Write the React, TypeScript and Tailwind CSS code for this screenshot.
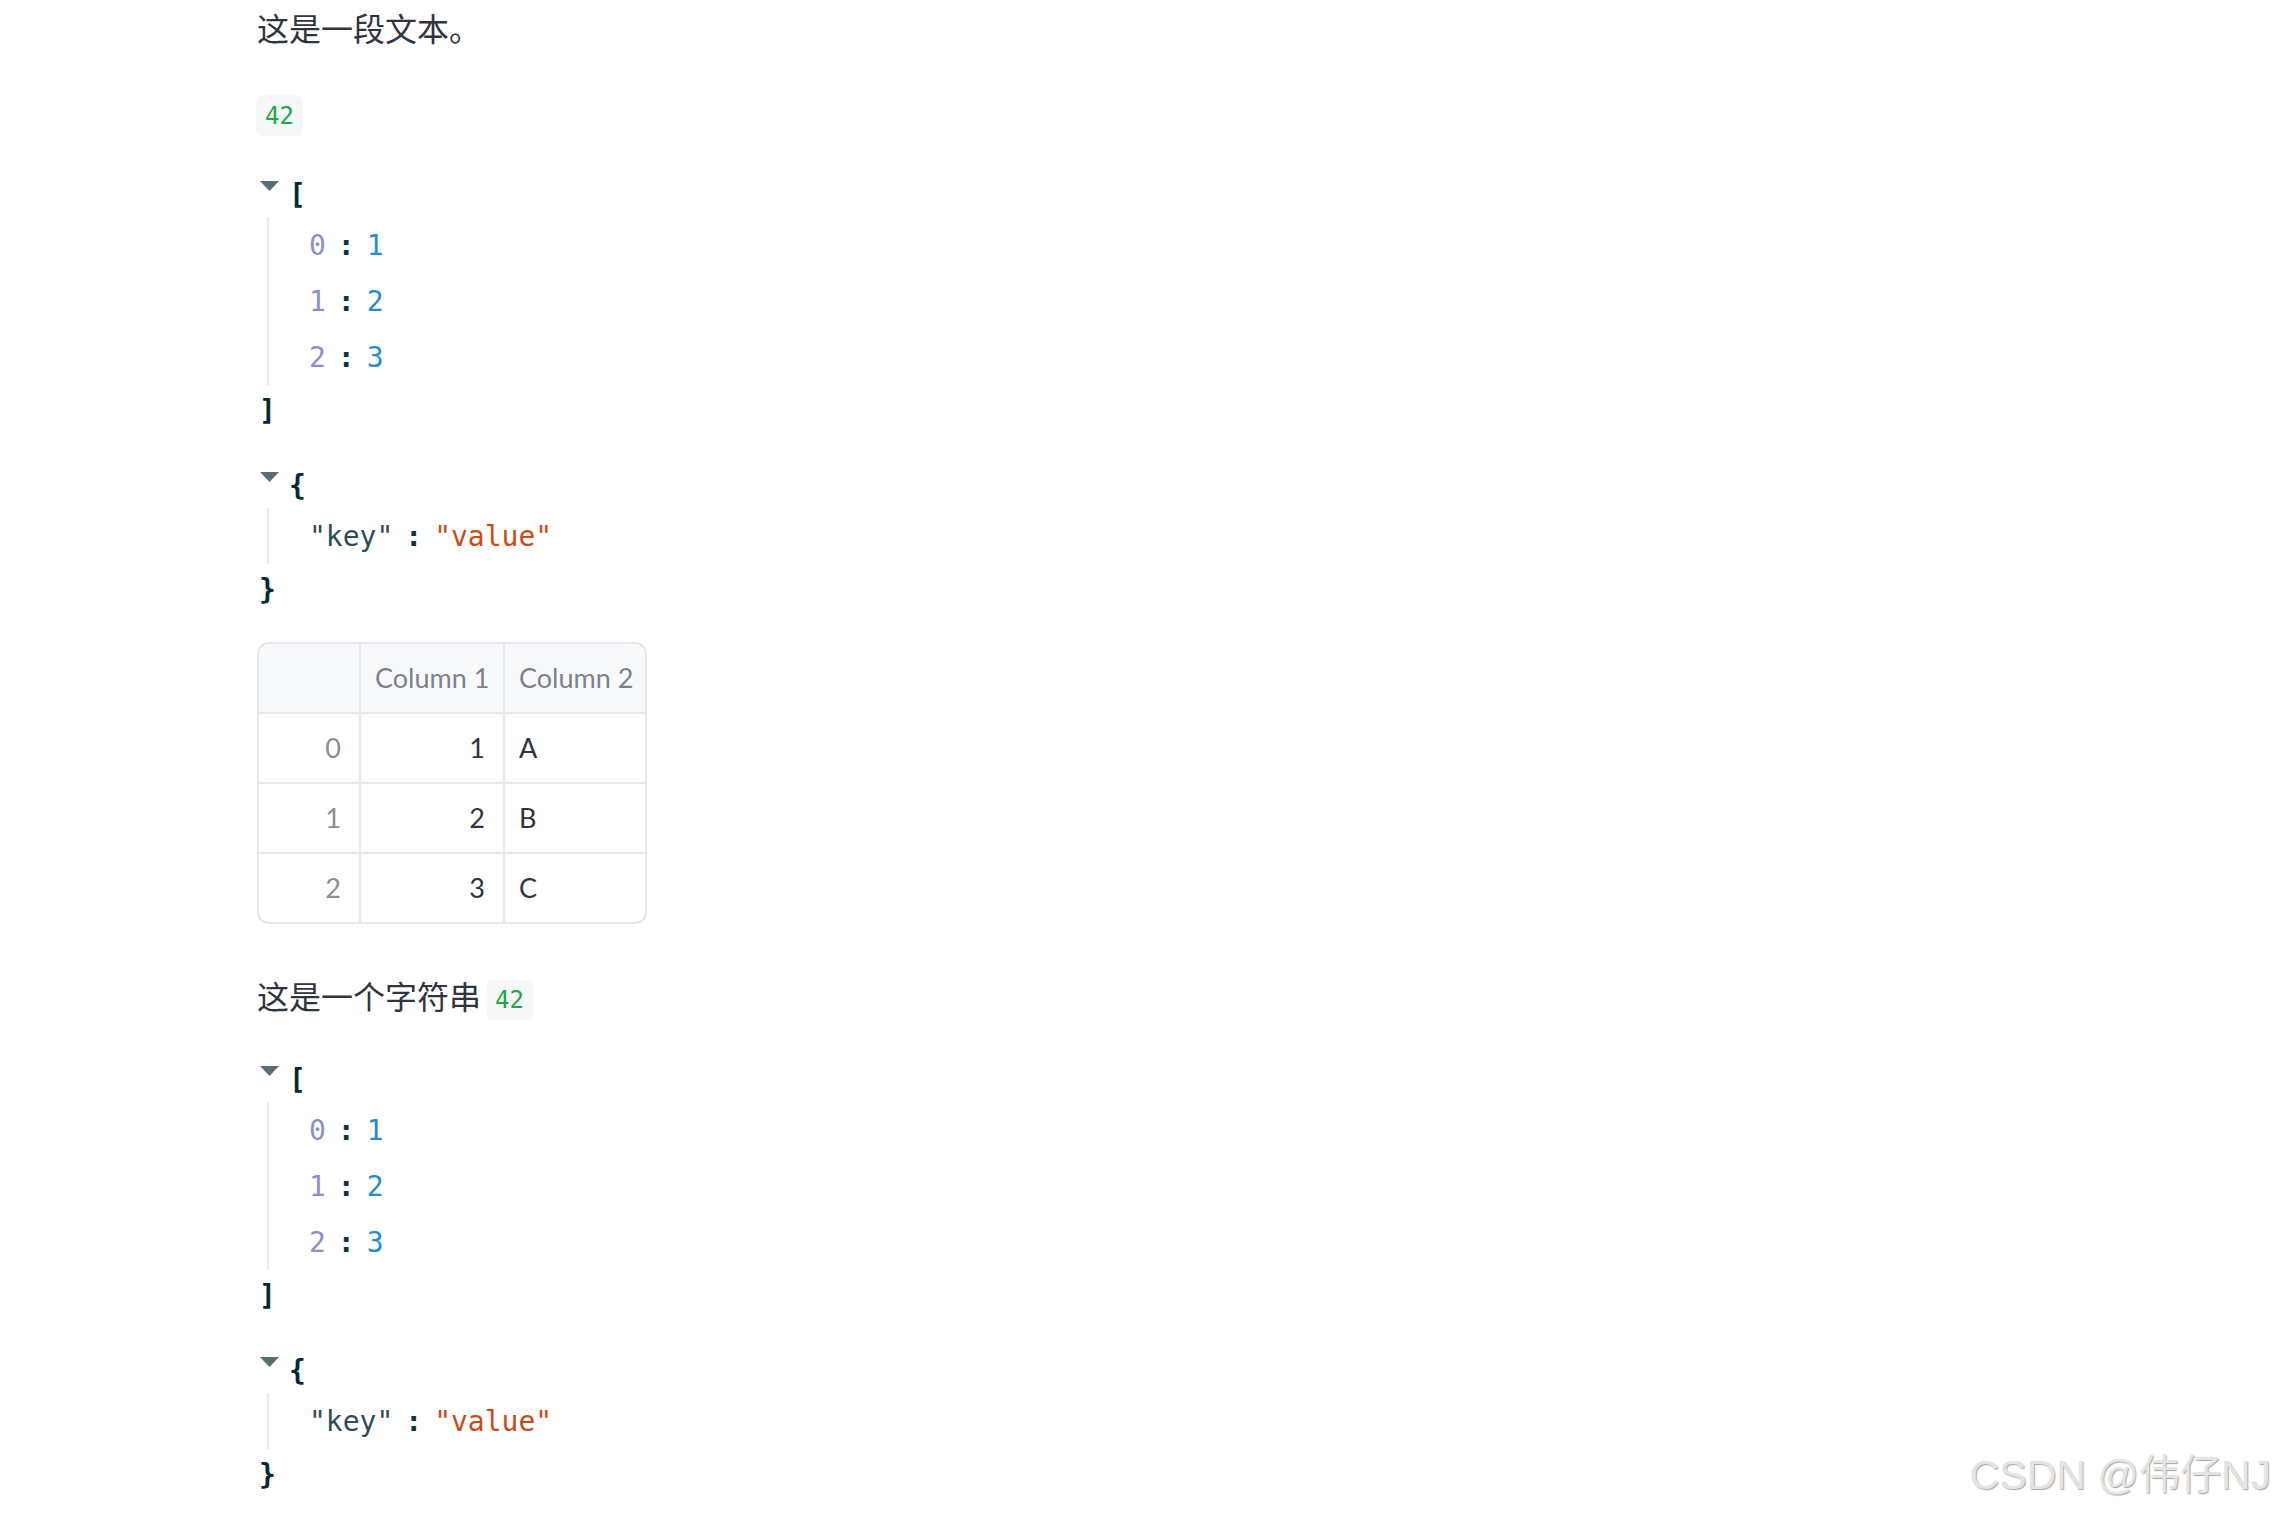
import React from 'react';

const mono = "font-['DejaVu_Sans_Mono',monospace]";

const Caret = () => (
  <svg className="ml-[3px] mt-[10px] shrink-0" width="19" height="10" viewBox="0 0 19 10">
    <polygon points="0,0 19,0 9.5,10" fill="#586e75" />
  </svg>
);

const Badge = ({ className = '' }: { className?: string }) => (
  <code className={`flex items-center rounded-[7px] bg-[#f6f7f9] px-[9px] text-[24px] text-[#21a846] ${mono} ${className}`}>
    42
  </code>
);

const JsonArray = ({ className = '' }: { className?: string }) => (
  <div className={`text-[28px] ${mono} ${className}`}>
    <div className="flex h-[46px] items-start">
      <Caret />
      <span className="ml-[10px] font-bold leading-[48px] text-[#002b36]">[</span>
    </div>
    <div className="ml-[10px] border-l-2 border-[#e8eaea] pl-[40px]">
      {[1, 2, 3].map((v, i) => (
        <div key={i} className="h-[56px] whitespace-pre leading-[58px]">
          <span className="text-[#8b8ecf]">{i}</span>
          <span className="mx-[12px] font-bold text-[#073642]">:</span>
          <span className="text-[#268bd2]">{v}</span>
        </div>
      ))}
    </div>
    <div className="ml-[2px] h-[46px] font-bold leading-[52px] text-[#002b36]">]</div>
  </div>
);

const JsonObject = ({ className = '' }: { className?: string }) => (
  <div className={`text-[28px] ${mono} ${className}`}>
    <div className="flex h-[46px] items-start">
      <Caret />
      <span className="ml-[10px] font-bold leading-[48px] text-[#002b36]">{'{'}</span>
    </div>
    <div className="ml-[10px] border-l-2 border-[#e8eaea] pl-[40px]">
      <div className="h-[56px] whitespace-pre leading-[58px]">
        <span className="text-[#2f4b55]">"key"</span>
        <span className="mx-[12px] font-bold text-[#073642]">:</span>
        <span className="text-[#cb4b16]">"value"</span>
      </div>
    </div>
    <div className="ml-[2px] h-[46px] font-bold leading-[52px] text-[#002b36]">{'}'}</div>
  </div>
);

const rows = [
  { idx: 0, c1: 1, c2: 'A' },
  { idx: 1, c1: 2, c2: 'B' },
  { idx: 2, c1: 3, c2: 'C' },
];

const DataTable = () => (
  <div className="mt-[32px] w-[390px] overflow-hidden rounded-[12px] border-2 border-[#e6e7ea] font-['Lato',sans-serif] text-[27px]">
    <div className="flex h-[68px] bg-[#f8f9fb] text-[#7e808a]">
      <div className="w-[100px]" />
      <div className="w-[2px] bg-[#e6e7ea]" />
      <div className="flex w-[142px] items-center pl-[14px]">Column 1</div>
      <div className="w-[2px] bg-[#e6e7ea]" />
      <div className="flex w-[140px] items-center pl-[14px]">Column 2</div>
    </div>
    {rows.map((r) => (
      <div key={r.idx} className="flex h-[70px] border-t-2 border-[#e6e7ea]">
        <div className="flex w-[100px] items-center justify-end pr-[18px] text-[#8c8e98]">{r.idx}</div>
        <div className="w-[2px] bg-[#e6e7ea]" />
        <div className="flex w-[142px] items-center justify-end pr-[18px] text-[#31333f]">{r.c1}</div>
        <div className="w-[2px] bg-[#e6e7ea]" />
        <div className="flex w-[140px] items-center pl-[14px] text-[#31333f]">{r.c2}</div>
      </div>
    ))}
  </div>
);

export default function App() {
  return (
    <div className="relative h-[1516px] w-full overflow-hidden bg-white pl-[257px]">
      <p className="mt-[2px] h-[51px] font-['Noto_Sans_CJK_SC',sans-serif] text-[32px] leading-[51px] text-[#31333f]">
        这是一段文本。
      </p>
      <div className="mt-[42px] flex">
        <Badge className="-ml-px h-[41px]" />
      </div>
      <JsonArray className="mt-[35px]" />
      <JsonObject className="mt-[31px]" />
      <DataTable />
      <div className="mt-[46px] flex items-start">
        <span className="h-[51px] font-['Noto_Sans_CJK_SC',sans-serif] text-[32px] leading-[51px] text-[#31333f]">
          这是一个字符串
        </span>
        <Badge className="ml-[5px] mt-[10px] h-[40px]" />
      </div>
      <JsonArray className="mt-[35px]" />
      <JsonObject className="mt-[31px]" />

      <div className="absolute bottom-[20px] right-[4px] font-['Liberation_Sans','Noto_Sans_CJK_SC',sans-serif] text-[41px] leading-none text-[#e4e4e4] [text-shadow:1px_1px_1px_rgba(0,0,0,0.35)]">
        CSDN @伟仔NJ
      </div>
    </div>
  );
}
